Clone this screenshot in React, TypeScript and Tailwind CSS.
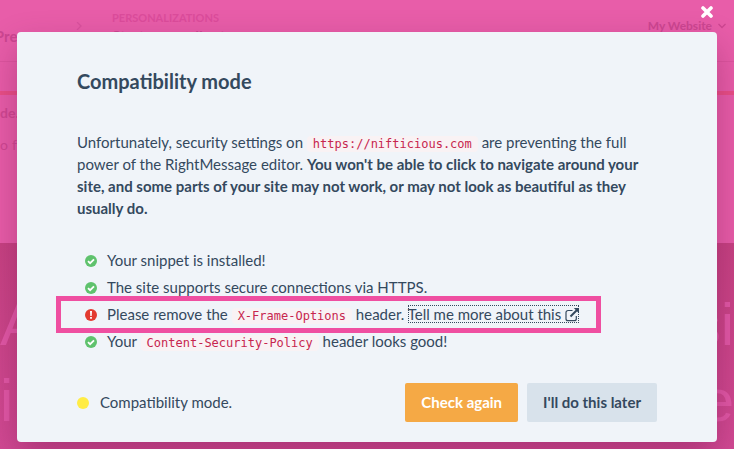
import { ReactNode } from "react";

const Code = ({ children }: { children: ReactNode }) => (
  <code className="rounded bg-[#f9f2f4] px-1.5 py-px font-['DejaVu_Sans_Mono',monospace] text-xs leading-none text-[#c7254e]">
    {children}
  </code>
);

const StatusIcon = ({ ok }: { ok: boolean }) => (
  <svg viewBox="0 0 12 12" className="mt-2 size-3 shrink-0" aria-hidden="true">
    <circle cx="6" cy="6" r="6" fill={ok ? "#5fc26d" : "#e33b30"} />
    {ok ? (
      <path d="M3 6.1 5.1 8.2 9 4.3" fill="none" stroke="#fff" strokeWidth="1.8" />
    ) : (
      <path d="M5 2h2l-.3 5H5.3zM5.1 8h1.8v1.8H5.1z" fill="#fff" />
    )}
  </svg>
);

const ExternalIcon = () => (
  <svg viewBox="0 0 14 14" className="ml-1 inline-block size-3.5 align-[-2px]" fill="none" aria-hidden="true">
    <path
      d="M7.5 2.5H3A2 2 0 0 0 1 4.5v6.2a2 2 0 0 0 2 2h6.3a2 2 0 0 0 2-2V8"
      stroke="currentColor"
      strokeWidth="1.2"
    />
    <path d="M5.5 8.5 12 2" stroke="currentColor" strokeWidth="2" />
    <path d="M8.8 0H14v5.2z" fill="currentColor" />
  </svg>
);

const CheckItem = ({ ok = true, children }: { ok?: boolean; children: ReactNode }) => (
  <li className="flex gap-2.5">
    <StatusIcon ok={ok} />
    <div>{children}</div>
  </li>
);

const Backdrop = () => (
  <div className="flex min-h-screen flex-col" aria-hidden="true">
    <div className="flex h-[62px] items-start justify-between border-b border-[#dd559f] pr-2 text-[#cc4691]">
      <div className="flex">
        <p className="flex w-6 justify-end pt-[26px] text-[15px] leading-5 font-bold">Pres</p>
        <svg viewBox="0 0 6 8" className="ml-[52px] mt-[22px] h-2 w-1.5" fill="none">
          <path d="m1 0 4 4-4 4" stroke="#d9529e" strokeWidth="1.2" />
        </svg>
        <div className="ml-[30px] pt-2.5 font-bold">
          <p className="text-[11px] leading-4 text-[#dc4c9c]">PERSONALIZATIONS</p>
          <p className="text-[15px] leading-5">Start your rollout</p>
        </div>
      </div>
      <p className="flex items-center gap-1.5 pt-[18px] text-xs font-bold">
        My Website
        <svg viewBox="0 0 8 6" className="h-1.5 w-2" fill="none">
          <path d="m.5 1 3.5 3.5L7.5 1" stroke="currentColor" strokeWidth="1.3" />
        </svg>
      </p>
    </div>
    <div className="mt-[29px] h-1 bg-[#e94f87]" />
    <div className="h-[148px] pt-2 text-sm leading-5 text-[#d04893]">
      <p className="font-bold">de.</p>
      <p className="mt-3 flex gap-1">
        <span>o</span>
        <span>f</span>
      </p>
    </div>
    <div className="flex-1 bg-linear-to-b from-[#c74283] to-[#d24a94] pt-11 font-['Liberation_Sans',sans-serif] text-[60px] leading-[76px] text-[#e259a7]">
      <p className="flex justify-between">
        <span>A</span>
        <span>si</span>
      </p>
      <p className="flex justify-between">
        <span>in</span>
        <span>e</span>
      </p>
    </div>
  </div>
);

const App = () => (
  <div className="relative h-screen overflow-hidden bg-[#e85da9] font-['Lato',sans-serif] text-[#34495e]">
    <Backdrop />
    <div className="absolute inset-0 px-[17px]">
      <div className="mx-auto flex h-8 max-w-[700px] items-start justify-end pt-1.5">
        <button type="button" aria-label="Close" className="mr-1">
          <svg viewBox="0 0 12 12" className="size-3" fill="none">
            <path d="m2 2 8 8M10 2l-8 8" stroke="#fff" strokeWidth="3.6" strokeLinecap="round" />
          </svg>
        </button>
      </div>
      <div
        role="dialog"
        aria-labelledby="dialog-title"
        className="mx-auto max-w-[700px] rounded bg-[#f0f4f9] px-[60px] pb-5 pt-[35px] shadow-[0_15px_35px_rgba(80,0,50,0.3)]"
      >
        <h1 id="dialog-title" className="text-xl font-bold leading-7">
          Compatibility mode
        </h1>
        <p className="mt-9 text-[15px] leading-[22px]">
          Unfortunately, security settings on <Code>https://nifticious.com</Code> are preventing the full power of the
          RightMessage editor.{" "}
          <strong className="font-bold">
            You won't be able to click to navigate around your site, and some parts of your site may not work, or may
            not look as beautiful as they usually do.
          </strong>
        </p>
        <ul className="relative mt-7 pl-2 text-[15px] leading-[27px]">
          <CheckItem>Your snippet is installed!</CheckItem>
          <CheckItem>The site supports secure connections via HTTPS.</CheckItem>
          <CheckItem ok={false}>
            Please remove the <Code>X-Frame-Options</Code> header.{" "}
            <a href="#" className="outline-1 -outline-offset-1 outline-dotted outline-[#34495e]">
              Tell me more about this
              <ExternalIcon />
            </a>
          </CheckItem>
          <CheckItem>
            Your <Code>Content-Security-Policy</Code> header looks good!
          </CheckItem>
          <li className="pointer-events-none absolute -left-[21px] top-[49px] h-[37px] w-[545px] border-[5px] border-[#ef4fa1]" />
        </ul>
        <div className="mt-7 flex items-center justify-between">
          <p className="flex items-center gap-[11px] text-[15px]">
            <span className="size-3 rounded-full bg-[#ffec45]" />
            Compatibility mode.
          </p>
          <div className="flex gap-[9px] text-[15px] font-bold">
            <button type="button" className="h-[39px] rounded-xs bg-[#f5a945] px-4 text-white">
              Check again
            </button>
            <button type="button" className="h-[39px] rounded-xs bg-[#d8e2eb] px-4">
              I'll do this later
            </button>
          </div>
        </div>
      </div>
    </div>
  </div>
);

export default App;
